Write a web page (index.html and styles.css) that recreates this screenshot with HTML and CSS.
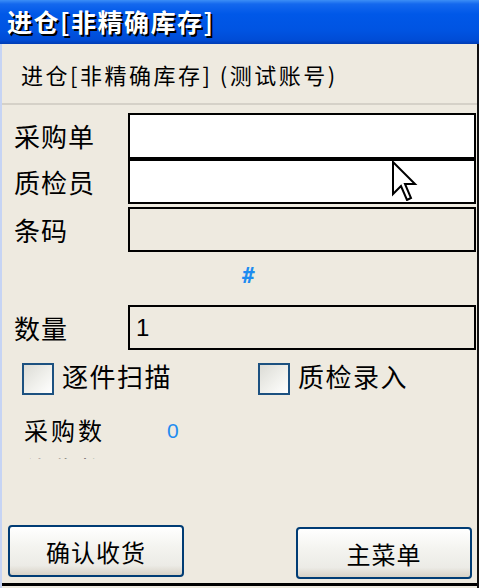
FILE: index.html
```html
<!DOCTYPE html>
<html lang="zh-CN">
<head>
<meta charset="utf-8">
<title>进仓[非精确库存]</title>
<link rel="stylesheet" href="styles.css">
</head>
<body>
<div class="titlebar"><span class="title-text">进仓[非精确库存]</span></div>
<div class="win">
  <div class="subtitle">进仓[非精确库存] (测试账号)</div>
  <div class="sep"></div>
  <div class="form">
    <div class="row r1">
      <span class="label">采购单</span>
      <div class="input white"></div>
    </div>
    <div class="row r2">
      <span class="label">质检员</span>
      <div class="input white cursor-host">
        <svg class="cursor" width="26" height="40" viewBox="0 0 13 20">
          <path d="M0.5 0.5 L0.5 16.5 L4.5 12.5 L7.5 19.5 L9.5 18.5 L6.5 11.5 L11.5 11.5 Z" fill="#fff" stroke="#000" stroke-width="1"/>
        </svg>
      </div>
    </div>
    <div class="row r3">
      <span class="label">条码</span>
      <div class="input"></div>
    </div>
    <div class="hash-row"><span class="hash">#</span></div>
    <div class="row r4">
      <span class="label">数量</span>
      <div class="input"><span class="value">1</span></div>
    </div>
  </div>
  <div class="checks">
    <label class="check c1"><span class="box"></span><span class="check-label">逐件扫描</span></label>
    <label class="check c2"><span class="box"></span><span class="check-label">质检录入</span></label>
  </div>
  <div class="stat">
    <span class="stat-label">采购数</span><span class="stat-value">0</span>
  </div>
  <div class="clipped"><span class="stat-label">待收数</span></div>
  <div class="spacer"></div>
  <div class="buttons">
    <button class="btn b1">确认收货</button>
    <button class="btn b2">主菜单</button>
  </div>
  <div class="bottom-line"></div>
</div>
</body>
</html>
```

FILE: styles.css
```css
html, body {
  margin: 0;
  padding: 0;
}
body {
  width: 479px;
  height: 588px;
  overflow: hidden;
  background: #EEEAE0;
  font-family: "Noto Sans CJK SC", "Noto Sans", sans-serif;
  color: #000;
}
.titlebar {
  height: 44px;
  background: linear-gradient(#3C8EF6 0px, #1468EE 4px, #0058E8 14px, #0054E2 30px, #004CD6 40px, #003CB4 44px);
  display: flex;
  align-items: center;
  padding-left: 7px;
  box-sizing: border-box;
}
.title-text {
  color: #fff;
  font-weight: bold;
  font-size: 25px;
  letter-spacing: 1.5px;
  text-shadow: 2px 2px 0 #000;
  line-height: 1;
  margin-top: -2px;
}
.win {
  height: 544px;
  border-left: 2px solid #C6D4F4;
  border-right: 2px solid #111;
  box-sizing: border-box;
  display: flex;
  flex-direction: column;
}
.subtitle {
  height: 59px;
  display: flex;
  align-items: center;
  padding-left: 19px;
  font-size: 22px;
  letter-spacing: 2.5px;
}
.sep {
  height: 2px;
  background: #D5D1C8;
}
.form {
  margin-top: 8px;
  padding-left: 12px;
}
.row {
  display: grid;
  grid-template-columns: 114px 348px;
  align-items: center;
}
.label {
  font-size: 26px;
  letter-spacing: 1px;
  line-height: 1;
}
.input {
  box-sizing: border-box;
  border: 2px solid #000;
  background: #EEEAE0;
  display: flex;
  align-items: center;
}
.input.white {
  background: #fff;
}
.r1 .input { height: 46px; }
.r2 .input { height: 45px; }
.r3 { margin-top: 3px; }
.r3 .input { height: 45px; }
.r4 .input { height: 45px; }
.cursor-host {
  position: relative;
}
.cursor {
  position: absolute;
  left: 262px;
  top: 0px;
}
.hash-row {
  height: 53px;
  display: flex;
  align-items: center;
  padding-left: 228px;
}
.hash {
  color: #1E8CF0;
  font-family: "DejaVu Sans Mono", monospace;
  font-weight: bold;
  font-size: 21px;
  line-height: 1;
  margin-top: -4px;
}
.value {
  font-family: "Liberation Sans", sans-serif;
  font-size: 24px;
  padding-left: 6px;
  line-height: 1;
}
.checks {
  margin-top: 13px;
  display: flex;
  height: 32px;
}
.check {
  display: flex;
  align-items: center;
}
.c1 { margin-left: 20px; width: 236px; }
.box {
  width: 32px;
  height: 32px;
  box-sizing: border-box;
  border: 2px solid #1C5180;
  background: linear-gradient(135deg, #DCDCD6 0%, #F2F2EE 60%, #FFFFFF 100%);
  flex: none;
}
.check-label {
  font-size: 26px;
  letter-spacing: 1.5px;
  margin-left: 8px;
  line-height: 1;
  margin-top: -6px;
}
.stat {
  margin-top: 22px;
  padding-left: 22px;
  display: flex;
  align-items: center;
  height: 26px;
}
.stat-label {
  font-size: 24px;
  letter-spacing: 3px;
  line-height: 1;
}
.stat-value {
  color: #1E8CF0;
  font-family: "Liberation Sans", sans-serif;
  font-size: 21px;
  margin-left: 62px;
  line-height: 1;
}
.clipped {
  margin-top: 14px;
  height: 2px;
  overflow: hidden;
  padding-left: 22px;
  display: flex;
  align-items: flex-start;
}
.spacer {
  flex: 1;
}
.buttons {
  display: flex;
  justify-content: space-between;
  padding: 0 5px 0 6px;
  align-items: flex-start;
}
.btn {
  width: 176px;
  height: 52px;
  box-sizing: border-box;
  border: 2px solid #003C74;
  border-radius: 4px;
  background: linear-gradient(#FFFFFF 0%, #F4F4F0 40%, #ECEBE6 80%, #D8D2C6 100%);
  font-family: "Noto Sans CJK SC", sans-serif;
  font-size: 24px;
  letter-spacing: 1px;
  color: #000;
  padding: 0;
}
.b2 { margin-top: 2px; }
.bottom-line {
  margin-top: 4px;
  height: 3px;
  background: #000;
  margin-bottom: 2px;
}
```
